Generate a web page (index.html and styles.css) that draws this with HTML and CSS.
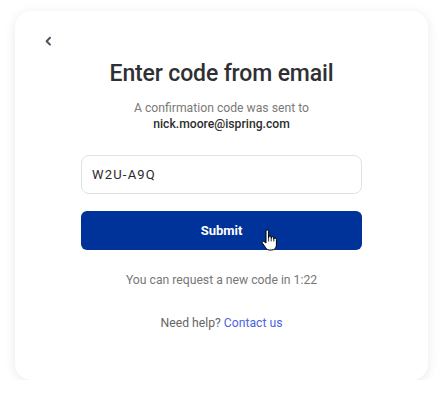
FILE: index.html
```html
<!DOCTYPE html>
<html lang="en">
<head>
  <meta charset="UTF-8" />
  <title>Enter code from email</title>
  <link rel="stylesheet" href="styles.css">
</head>
<body>

  <!-- 인증 코드 카드 -->
  <div class="card">
    <button class="back" type="button" aria-label="Back">
      <svg width="24" height="24" viewBox="0 0 24 24"><path d="M14 7.8 L10.6 11.2 L14 14.6" fill="none" stroke="#4d5360" stroke-width="2" stroke-linecap="round" stroke-linejoin="round"/></svg>
    </button>

    <h1 class="title">Enter code from email</h1>
    <p class="subtitle">A confirmation code was sent to<br><span class="email">nick.moore@ispring.com</span></p>

    <form class="form">
      <input class="code-input" type="text" value="W2U-A9Q">
      <button class="submit" type="button">
        Submit
        <!-- 마우스 커서 -->
        <svg class="cursor" width="18" height="22" viewBox="0 0 18 22">
          <path d="M6 14 V2.2 a1.3 1.3 0 0 1 2.6 0 V9 V8.3 a1.3 1.3 0 0 1 2.6 0 V9.5 V9 a1.3 1.3 0 0 1 2.6 0 V10.3 a1.3 1.3 0 0 1 2.6 0 V16 c0 3 -2 5 -4.5 5 H9.5 c-1.8 0 -2.8 -0.8 -3.8 -2.2 L2.3 14 c-0.8 -1.1 0.6 -2.4 1.7 -1.5 Z" fill="#fff" stroke="#000" stroke-width="1" stroke-linejoin="round"/>
          <path d="M8.6 9 V12.5 M11.2 9.5 V12.5 M13.8 10.3 V12.5" stroke="#000" stroke-width="0.8"/>
        </svg>
      </button>
    </form>

    <p class="timer">You can request a new code in 1:22</p>
    <p class="help">Need help? <a href="#">Contact us</a></p>
  </div>

</body>
</html>
```

FILE: styles.css
```css
/* 페이지 */
body {
  margin: 0;
  background: #fff;
  font-family: Roboto, "Liberation Sans", sans-serif;
  color: #333;
}

.card {
  box-sizing: border-box;
  width: 413px;
  height: 369px;
  margin: 11px 0 0 15px;
  padding: 19px 21px 0;
  background: #fff;
  border-radius: 16px;
  box-shadow: 0 2px 12px rgba(0, 0, 0, 0.09);
  display: flex;
  flex-direction: column;
  align-items: center;
}

.back {
  align-self: flex-start;
  width: 24px;
  height: 24px;
  padding: 0;
  border: 0;
  background: none;
  cursor: pointer;
}

.back svg {
  display: block;
}

.title {
  margin: 6px 0 0;
  font-size: 23px;
  line-height: 28px;
  font-weight: 500;
  letter-spacing: -0.15px;
  color: #2f3033;
}

.subtitle {
  margin: 12px 0 0;
  font-size: 12.2px;
  line-height: 16px;
  text-align: center;
  color: #7a7a7a;
}

.email {
  font-weight: 500;
  color: #2e2e2e;
}

/* 입력 폼 */
.form {
  width: 281px;
  margin-top: 23px;
  display: flex;
  flex-direction: column;
  gap: 17px;
}

.code-input {
  box-sizing: border-box;
  height: 39px;
  padding: 0 10px;
  border: 1px solid #e2e2e2;
  border-radius: 8px;
  font-family: Roboto, "Liberation Sans", sans-serif;
  font-size: 13px;
  letter-spacing: 1.2px;
  color: #2a2a2a;
  outline: none;
}

.submit {
  position: relative;
  height: 39px;
  border: 0;
  border-radius: 6px;
  background: #003399;
  color: #fff;
  font-family: Roboto, "Liberation Sans", sans-serif;
  font-size: 13px;
  font-weight: 700;
}

.cursor {
  position: absolute;
  left: 179px;
  top: 18px;
}

.timer {
  margin: 22px 0 0;
  font-size: 12.2px;
  line-height: 16px;
  color: #777;
}

.help {
  margin: 27px 0 0;
  font-size: 12.2px;
  line-height: 16px;
  color: #666;
}

.help a {
  color: #4a63e0;
  text-decoration: none;
}
```
